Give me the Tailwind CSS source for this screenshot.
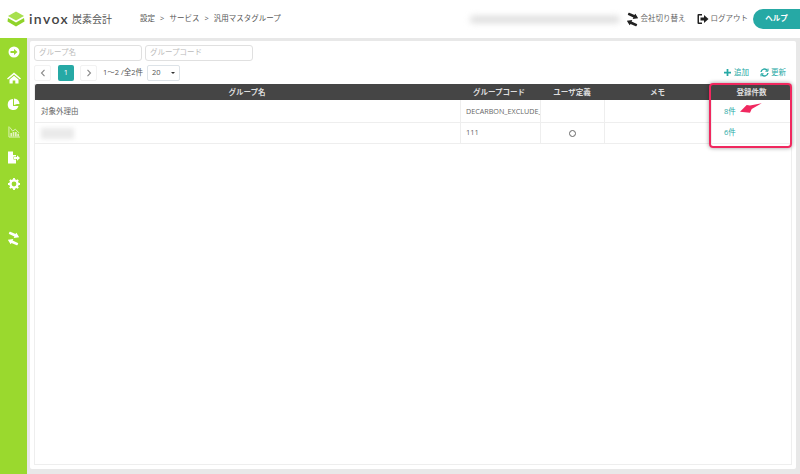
<!DOCTYPE html>
<html lang="ja">
<head>
<meta charset="UTF-8">
<title>汎用マスタグループ</title>
<script src="https://cdn.jsdelivr.net/npm/@tailwindcss/browser@4"></script>
</head>
<body class="w-[800px] h-[474px] overflow-hidden bg-[#e8e8e8] text-[#666] font-['Open_Sans','Noto_Sans_CJK_JP',sans-serif] text-[7.5px] relative">

<!-- header -->
<header class="h-[38px] bg-white flex items-center">
  <svg class="ml-[7px] w-[18px] h-[18px]" viewBox="0 0 18 18">
    <path d="M9 1.5 L17 6 L9 10.5 L1 6Z" fill="#a8e04e"/>
    <path d="M1 8 L9 12.5 L17 8 L17.5 11.5 L9 16.5 L.5 11.5Z" fill="#8fd32a"/>
  </svg>
  <span class="ml-[4px] text-[14px] leading-none font-semibold tracking-[1.4px] text-[#444] font-['Lato','Open_Sans',sans-serif]">invox</span>
  <span class="ml-[3px] text-[10px] text-[#555]">炭素会計</span>
  <nav class="ml-[28px] flex items-center gap-[5px] text-[#555]">
    <span>設定</span><span>&gt;</span><span>サービス</span><span>&gt;</span><span>汎用マスタグループ</span>
  </nav>
  <div class="ml-auto flex items-center">
    <div class="w-[150px] h-[7px] mr-[6px] rounded-full bg-[#ddd] blur-[3px]"></div>
    <svg class="w-[13px] h-[13px] rotate-[25deg]" viewBox="0 0 14 14" fill="#222">
      <path d="M0 1.8H7V0L12 3.25L7 6.5V4.7H0Z"/>
      <path d="M14 9.3H7V7.5L2 10.75L7 14V12.2H14Z"/>
    </svg>
    <span class="ml-[2px]">会社切り替え</span>
    <svg class="ml-[11px] w-[12px] h-[12px]" viewBox="0 0 12 12" fill="#222">
      <path d="M5 1H1.5A1 1 0 0 0 .5 2V10A1 1 0 0 0 1.5 11H5V9.6H2V2.4H5Z"/>
      <path d="M3.5 4.5H7V2L11.5 6L7 10V7.5H3.5Z"/>
    </svg>
    <span class="ml-[2px]">ログアウト</span>
    <div class="ml-[5px] w-[47px] h-[20px] bg-[#26a9a5] rounded-l-[10px] flex items-center justify-center text-white font-bold">ヘルプ</div>
  </div>
</header>

<div class="flex h-[436px]">
  <!-- sidebar -->
  <aside class="w-[27px] bg-[#9ad92e] flex flex-col items-center pt-[8px]">
    <svg class="w-[12px] h-[12px]" viewBox="0 0 12 12"><circle cx="6" cy="6" r="5.5" fill="white"/><path d="M2.5 5H6V3L9.5 6L6 9V7H2.5Z" fill="#9ad92e"/></svg>
    <svg class="mt-[14px] w-[14px] h-[12px]" viewBox="0 0 14 12" fill="white"><path d="M7 0.5L14 6.5L13 7.5L7 2.5L1 7.5L0 6.5Z"/><path d="M2.5 7.5L7 3.8L11.5 7.5V11.5H8.3V8.5H5.7V11.5H2.5Z"/></svg>
    <svg class="mt-[14px] w-[13px] h-[13px]" viewBox="0 0 13 13" fill="white"><path d="M6 1A5.5 5.5 0 1 0 11.5 8H6Z"/><path d="M7 0.5A5.5 5.5 0 0 1 12.5 6H10L7 7Z"/></svg>
    <svg class="mt-[15px] w-[12px] h-[12px]" viewBox="0 0 13 12" fill="none" stroke="#e3f3c0" stroke-width="1"><path d="M1 0V11.5H13"/><path d="M2 1L5 5L8 3L12 7" /><path d="M3.5 11V7M6 11V6M8.5 11V6M11 11V8" stroke-width="1.8"/></svg>
    <svg class="mt-[13px] w-[13px] h-[13px]" viewBox="0 0 13 13" fill="white"><path d="M1 0.5H6V4H9V5.5H6.5V8.5H9V12.5H1Z"/><path d="M7 6H10V4.2L13 7L10 9.8V8H7Z"/></svg>
    <svg class="mt-[14px] w-[12px] h-[12px]" viewBox="0 0 12 12"><circle cx="6" cy="6" r="3.6" fill="none" stroke="white" stroke-width="2.4"/><path d="M6 0V2.5M6 9.5V12M0 6H2.5M9.5 6H12M1.8 1.8L3.5 3.5M8.5 8.5L10.2 10.2M1.8 10.2L3.5 8.5M8.5 3.5L10.2 1.8" stroke="white" stroke-width="1.8"/></svg>
    <svg class="mt-[42px] w-[13px] h-[13px] rotate-[25deg]" viewBox="0 0 14 14" fill="white"><path d="M0 1.8H7V0L12 3.25L7 6.5V4.7H0Z"/><path d="M14 9.3H7V7.5L2 10.75L7 14V12.2H14Z"/></svg>
  </aside>

  <!-- main panel -->
  <main class="ml-[3px] mt-[3px] w-[766px] h-[428px] bg-white rounded-[2px] pt-[4px] px-[4px] flex flex-col">
    <div class="flex gap-[3px]">
      <div class="w-[108px] h-[16px] border border-[#e0e0e0] rounded-[3px] pl-[4px] flex items-center text-[#bbb]">グループ名</div>
      <div class="w-[108px] h-[16px] border border-[#e0e0e0] rounded-[3px] pl-[4px] flex items-center text-[#bbb]">グループコード</div>
    </div>
    <div class="flex items-center h-[17px] mt-[3px]">
      <div class="w-[17px] h-[16px] border border-[#f2f2f2] rounded-[2px] flex items-center justify-center">
        <svg class="w-[6px] h-[8px]" viewBox="0 0 6 8" fill="none" stroke="#888" stroke-width="1.1"><path d="M4.5 .8L1.5 4L4.5 7.2"/></svg>
      </div>
      <div class="ml-[7px] w-[16px] h-[16px] bg-[#26a9a5] rounded-[2px] flex items-center justify-center text-white">1</div>
      <div class="ml-[6px] w-[17px] h-[16px] border border-[#f2f2f2] rounded-[2px] flex items-center justify-center">
        <svg class="w-[6px] h-[8px]" viewBox="0 0 6 8" fill="none" stroke="#888" stroke-width="1.1"><path d="M1.5 .8L4.5 4L1.5 7.2"/></svg>
      </div>
      <span class="ml-[6px] text-[#555]">1～2 /全2件</span>
      <div class="ml-[4px] w-[33px] h-[16px] border border-[#dde3e8] rounded-[2px] flex items-center justify-between px-[4px] text-[#555]">
        <span>20</span><span class="w-0 h-0 border-x-[2px] border-x-transparent border-t-[2px] border-t-[#333]"></span>
      </div>
      <div class="ml-auto flex items-center text-[#26a9a5] pr-[6px]">
        <svg class="w-[7px] h-[7px]" viewBox="0 0 8 8" fill="#26a9a5"><path d="M3 0H5V3H8V5H5V8H3V5H0V3H3Z"/></svg>
        <span class="ml-[3px]">追加</span>
        <svg class="ml-[11px] w-[9px] h-[9px]" viewBox="0 0 9 9" fill="none" stroke="#26a9a5" stroke-width="1.4"><path d="M1 4A3.5 3.5 0 0 1 7.3 2.5M8 5A3.5 3.5 0 0 1 1.7 6.5"/><path d="M8 .6V3.2H5.4M1 8.4V5.8H3.6" stroke-width="1"/></svg>
        <span class="ml-[2px]">更新</span>
      </div>
    </div>

    <!-- table -->
    <div class="flex-1 mt-[3px] border-x border-b border-[#eee] flex flex-col">
      <div class="flex h-[16px] bg-[#454545] text-[#ddd] font-semibold text-center leading-[16px] rounded-t-[2px]">
        <div class="w-[426px] pr-[2px]">グループ名</div>
        <div class="w-[80px] pr-[4px]">グループコード</div>
        <div class="w-[64px] pr-[2px]">ユーザ定義</div>
        <div class="w-[107px] pr-[2px]">メモ</div>
        <div class="flex-1">登録件数</div>
      </div>
      <div class="flex h-[23px] border-b border-[#eee] items-center">
        <div class="w-[426px] h-full border-r border-[#eee] pl-[6px] pt-[1px] flex items-center">対象外理由</div>
        <div class="w-[80px] h-full border-r border-[#eee] pl-[5px] pt-[1px] flex items-center whitespace-nowrap overflow-hidden"><span class="text-[7.2px]">DECARBON_EXCLUDE_</span></div>
        <div class="w-[64px] h-full border-r border-[#eee]"></div>
        <div class="w-[107px] h-full border-r border-[#eee]"></div>
        <div class="flex-1 pl-[12px] pt-[1px] text-[#26a9a5]">8件</div>
      </div>
      <div class="flex h-[21px] border-b border-[#eee] items-center">
        <div class="w-[426px] h-full border-r border-[#eee] pl-[6px] flex items-center"><div class="w-[33px] h-[11px] bg-[#eaeaea] blur-[2px]"></div></div>
        <div class="w-[80px] h-full border-r border-[#eee] pl-[5px] flex items-center">111</div>
        <div class="w-[64px] h-full border-r border-[#eee] flex items-center justify-center"><div class="w-[7px] h-[7px] rounded-full border border-[#666]"></div></div>
        <div class="w-[107px] h-full border-r border-[#eee]"></div>
        <div class="flex-1 pl-[12px] text-[#26a9a5]">6件</div>
      </div>
    </div>
    <div class="h-[4px]"></div>
  </main>
</div>

<!-- annotation: highlight box and arrow -->
<div class="absolute left-[709px] top-[83px] w-[83px] h-[65px] border-[2px] border-[#f0285f] rounded-[4px] shadow-[0_0_4px_rgba(0,0,0,0.4)]"></div>
<svg class="absolute left-[738px] top-[100px] w-[28px] h-[16px]" viewBox="0 0 28 16"><path d="M2 11.7L8.7 5L12 5.6L23.7 3.3L13.7 9L12 12.7Z" fill="#f0285f"/></svg>
</body>
</html>
